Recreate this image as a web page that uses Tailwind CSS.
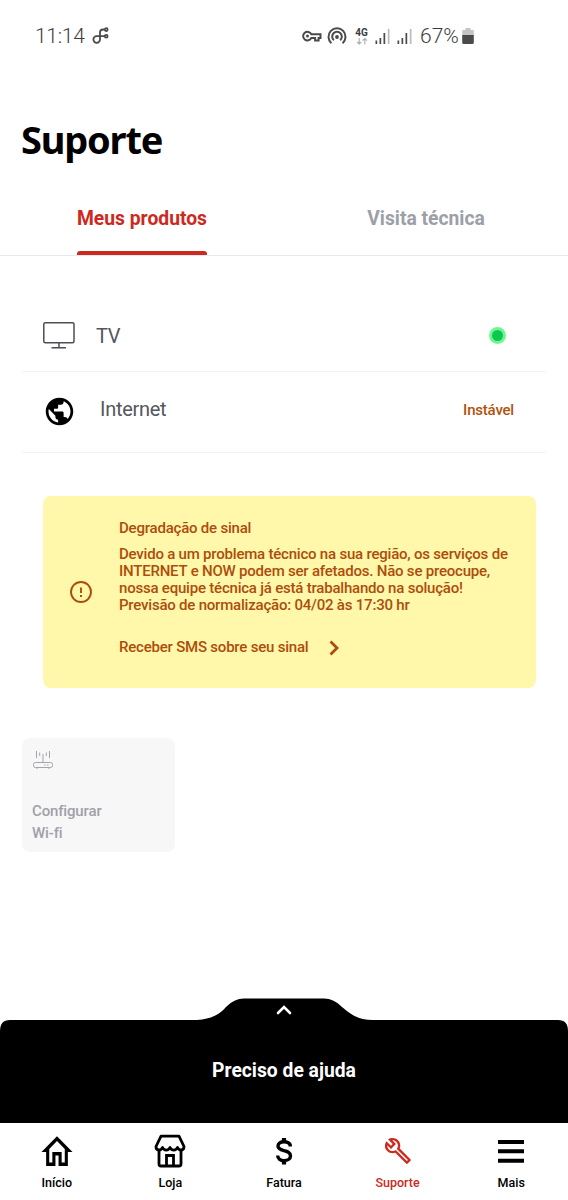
<!DOCTYPE html>
<html lang="pt-BR">
<head>
    <meta charset="UTF-8">
    <meta name="viewport" content="width=device-width, initial-scale=1.0">
    <script src="https://cdn.jsdelivr.net/npm/@tailwindcss/browser@4"></script>
    <title>Suporte</title>
</head>
<body class="bg-white">
    <div class="w-[568px] h-[1200px] flex flex-col overflow-hidden bg-white font-['Roboto',sans-serif]">

        <!-- Barra de status -->
        <div class="h-[72px] shrink-0 flex items-center pl-[35px] text-[#3c3c3c]">
            <span class="text-[21px] leading-6 font-light tracking-[-0.3px] w-[56px]">11:14</span>
            <svg class="w-[20px] h-[20px]" viewBox="0 0 20 20" fill="none" stroke="#4a4a4a" stroke-width="1.8">
                <path d="M13.500 3.500H12c-2 0-3 1-3 3v7a3.300 3.300 0 1 1-3.300-3.300H13.500"/>
                <circle cx="15.200" cy="3.600" r="1.400"/>
                <circle cx="15.200" cy="10.200" r="1.400"/>
            </svg>
            <div class="ml-[191px] flex items-center">
                <svg class="w-[20px] h-[14px]" viewBox="0 0 20 14" fill="none" stroke="#4a4a4a" stroke-width="2">
                    <path d="M9.300 5.200H18.500V9H16.600V11.600H13.100V9H9.300A4.300 4.300 0 1 1 9.300 5.200Z"/>
                    <circle cx="5.500" cy="7.100" r="1.500" fill="#4a4a4a" stroke="none"/>
                </svg>
                <svg class="ml-[5px] w-[20px] h-[18px]" viewBox="0 0 20 18" fill="none" stroke="#4a4a4a" stroke-width="2">
                    <path d="M4.400 16.200A8.500 8.500 0 1 1 15.600 16.200"/>
                    <path d="M6.800 13.200A4.800 4.800 0 1 1 13.200 13.200"/>
                    <circle cx="10" cy="10" r="1.900" fill="#4a4a4a" stroke="none"/>
                </svg>
                <div class="ml-[8px] w-[13px] flex flex-col items-center">
                    <span class="text-[10px] leading-[9px] font-bold">4G</span>
                    <svg class="w-[12px] h-[8px]" viewBox="0 0 12 8" fill="none" stroke="#aaa" stroke-width="1.100">
                        <path d="M3.200 1V7M1 4.800L3.200 7L5.400 4.800M8.800 7.500V1.500M6.600 3.700L8.800 1.500L11 3.700"/>
                    </svg>
                </div>
                <svg class="ml-[7px] w-[16px] h-[16px]" viewBox="0 0 16 16" fill="#4a4a4a">
                    <path d="M.5 12.500h1.700V16H.5zM4.500 10h1.700v6H4.500zM8.500 5h1.700v11H8.500z"/>
                    <path d="M12.800 1h1.700v15h-1.700z" fill="#bbb"/>
                </svg>
                <svg class="ml-[6px] w-[16px] h-[16px]" viewBox="0 0 16 16" fill="#4a4a4a">
                    <path d="M.5 12.500h1.700V16H.5zM4.500 10h1.700v6H4.500zM8.500 5h1.700v11H8.500z"/>
                    <path d="M12.800 1h1.700v15h-1.700z" fill="#bbb"/>
                </svg>
                <span class="ml-[7px] w-[42px] text-[21px] leading-6 font-light">67%</span>
                <svg class="w-[12px] h-[16px]" viewBox="0 0 12 16">
                    <path d="M3.500 0h5v2H11q.8 0 .8.800V8H.2V2.800Q.2 2 1 2h2.500z" fill="#c4c4c4"/>
                    <path d="M.2 7H11.800V14.500q0 1.500-1.500 1.500H1.700Q.2 16 .2 14.500z" fill="#4a4a4a"/>
                </svg>
            </div>
        </div>

        <h1 class="h-[111px] shrink-0 pl-[21px] pt-[41px] font-['Noto_Sans'] font-bold text-[38px] leading-[52px] tracking-[-1.200px] text-black">Suporte</h1>

        <!-- Abas -->
        <div class="h-[73px] shrink-0 flex border-b border-[#e9e9ec] text-[19.300px] leading-6 font-bold">
            <div class="flex-1 flex flex-col items-center">
                <div class="h-full flex flex-col justify-between pt-[24px] text-[#cc2a20]">
                    Meus produtos
                    <span class="h-1 rounded-t-[3px] bg-[#cc2a20]"></span>
                </div>
            </div>
            <div class="flex-1 pt-[24px] text-center text-[#9c9fa8]">Visita técnica</div>
        </div>

        <!-- Produtos -->
        <div class="mx-[22px] shrink-0 pt-[44px] text-[20px] tracking-[-0.300px] text-[#55565e]">
            <div class="h-[72px] flex items-center border-b border-[#f3f3f3]">
                <svg class="ml-[21px] w-[32px] h-[27px]" viewBox="0 0 32 27" fill="none" stroke="#4d4e54" stroke-width="1.500">
                    <rect x=".8" y=".8" width="30.200" height="20" rx="1.500"/>
                    <path d="M16 21v4.500M8.500 25.800h14.500"/>
                </svg>
                <span class="ml-[21px]">TV</span>
                <span class="ml-auto mr-[40px] w-[17px] h-[17px] rounded-full border-[3px] border-[#6ef78f] bg-[#0fc653]"></span>
            </div>
            <div class="h-[81px] flex items-center border-b border-[#f3f3f3] pb-[6px]">
                <svg class="ml-[21px] mt-[4px] w-[33px] h-[33px]" viewBox="0 0 24 24">
                    <path fill="#000" d="M12 2C6.480 2 2 6.480 2 12s4.480 10 10 10 10-4.480 10-10S17.520 2 12 2zm-1 17.930c-3.950-.49-7-3.850-7-7.930 0-.62.080-1.210.210-1.790L9 15v1c0 1.100.9 2 2 2v1.930zm6.900-2.540c-.26-.81-1-1.390-1.900-1.390h-1v-3c0-.55-.45-1-1-1H8v-2h2c.55 0 1-.45 1-1V7h2c1.100 0 2-.9 2-2v-.41c2.930 1.190 5 4.060 5 7.410 0 2.080-.8 3.970-2.100 5.390z"/>
                </svg>
                <span class="ml-[24px]">Internet</span>
                <span class="ml-auto mr-[32px] mt-[3px] text-[15px] tracking-[-0.200px] font-medium text-[#b0530c]">Instável</span>
            </div>
        </div>

        <!-- Aviso -->
        <div class="mt-[43px] ml-[43px] w-[493px] h-[192px] shrink-0 flex rounded-lg bg-[#fff8ab] text-[#ad4d0b]">
            <svg class="ml-[26px] mt-[84px] w-[24px] h-[24px]" viewBox="0 0 24 24" fill="none" stroke="currentColor" stroke-width="1.900">
                <circle cx="12" cy="12" r="10"/>
                <path d="M12 7.500v5.500M12 15v2"/>
            </svg>
            <div class="ml-[26px] pt-[24px] text-[15px] leading-[17px] tracking-[-0.210px] font-medium whitespace-nowrap">
                <p>Degradação de sinal</p>
                <p class="mt-[9px]">Devido a um problema técnico na sua região, os serviços de<br>INTERNET e NOW podem ser afetados. Não se preocupe,<br>nossa equipe técnica já está trabalhando na solução!<br>Previsão de normalização: 04/02 às 17:30 hr</p>
                <div class="mt-[25px] flex items-center">
                    <span>Receber SMS sobre seu sinal</span>
                    <svg class="ml-[20px] w-[12px] h-[16px]" viewBox="0 0 12 16" fill="none" stroke="currentColor" stroke-width="2.800">
                        <path d="M2.500 1.500L9 8L2.500 14.500"/>
                    </svg>
                </div>
            </div>
        </div>

        <div class="mt-[50px] ml-[22px] w-[153px] h-[114px] shrink-0 rounded-lg bg-[#f7f7f7] pl-[10px] pt-[12px]">
            <svg class="w-[22px] h-[20px]" viewBox="0 0 22 20" fill="none" stroke="#a3a4ab" stroke-width="1">
                <rect x="1.500" y="12.500" width="19" height="5" rx="2"/>
                <path d="M11 4v8.500M4.500 1v7M7.700 2.500v3.500M14.300 2.500v3.500M17.500 1v7M5 17.500v1.500M17 17.500v1.500M12 15h1.500M15 15h1.500"/>
            </svg>
            <p class="mt-[30px] text-[15px] leading-[22px] tracking-[-0.150px] font-medium text-[#a0a1a9]">Configurar<br>Wi-fi</p>
        </div>

        <!-- Painel de ajuda -->
        <div class="mt-auto h-[125px] shrink-0 flex flex-col text-white">
            <svg class="w-[568px] h-[40px] shrink-0" viewBox="0 0 568 40">
                <path fill="#000" d="M0 40V33Q0 22 10 22H197C212 21 220 16 226 9Q234 .5 244 .5H324Q334 .5 342 9C350 16 358 22 373 22H558Q568 22 568 33V40z"/>
                <path d="M278 15L284 9L290 15" fill="none" stroke="#fff" stroke-width="2.600" stroke-linecap="round"/>
            </svg>
            <div class="flex-1 bg-black pt-[21px] text-center text-[19.300px] leading-6 font-bold">Preciso de ajuda</div>
        </div>

        <!-- Navegação -->
        <nav class="h-[77px] shrink-0 grid grid-cols-5 pt-[10px] text-[12.500px] leading-4 font-medium text-black">
            <a href="#" class="flex flex-col items-center gap-[6px]">
                <svg class="w-[36px] h-[36px]" viewBox="0.4 1.1 23.2 20.6" preserveAspectRatio="none">
                    <path d="M12 5.690l5 4.500V18h-2v-6H9v6H7v-7.810l5-4.500M12 3L2 12h3v8h6v-6h2v6h6v-8h3L12 3z"/>
                </svg>
                Início
            </a>
            <a href="#" class="flex flex-col items-center gap-[6px]">
                <svg class="w-[36px] h-[36px]" viewBox="0 0 36 36" fill="none" stroke="#000" stroke-width="2.800">
                    <path d="M9 3.200H27L32 13.500C32 18 27 18 25.500 14.500C24 18 19.500 18 18 14.500C16.500 18 12 18 10.500 14.500C9 18 4 18 4 13.500Z" stroke-linejoin="round"/>
                    <path d="M7 16.500V31Q7 33 9 33H27Q29 33 29 31V16.500M14.500 33V22.500H21.500V33"/>
                </svg>
                Loja
            </a>
            <a href="#" class="flex flex-col items-center gap-[6px]">
                <svg class="w-[36px] h-[36px]" viewBox="0 0 36 36" fill="none" stroke="#000" stroke-width="3.400">
                    <path d="M24.300 13.500C24.300 10 21.500 8.700 18 8.700S12 10.200 12 13C12 19.500 24.500 15.500 24.500 23C24.500 26 21.500 27.600 18 27.600S11.700 26 11.700 22.500"/>
                    <path d="M18 5V9M18 27V31.500" stroke-width="4.200"/>
                </svg>
                Fatura
            </a>
            <a href="#" class="flex flex-col items-center gap-[6px] text-[#cc2a20]">
                <svg class="w-[36px] h-[36px]" viewBox="-3.2 -3.2 30.5 30.5" fill="currentColor">
                    <path d="M22.610 19l-9.080-9.080c.93-2.340.45-5.100-1.440-7C9.790.61 6.210.4 3.660 2.260L7.500 6.110 6.080 7.520 2.250 3.690C.39 6.230.6 9.820 2.900 12.110c1.860 1.860 4.570 2.350 6.890 1.480l9.110 9.110c.39.39 1.020.39 1.410 0l2.300-2.300c.4-.38.4-1.010 0-1.400zm-3 1.590l-9.460-9.460c-.61.45-1.290.72-2 .82-1.360.2-2.790-.21-3.830-1.250C3.370 9.760 2.930 8.500 3 7.260l3.090 3.090 4.240-4.240-3.090-3.090c1.240-.07 2.490.37 3.440 1.310 1.080 1.080 1.490 2.570 1.240 3.960-.12.71-.42 1.370-.88 1.960l9.450 9.450-.88.89z"/>
                </svg>
                Suporte
            </a>
            <a href="#" class="flex flex-col items-center gap-[6px]">
                <svg class="w-[36px] h-[36px]" viewBox="0 0 36 36">
                    <path d="M5 7h26v4H5zM5 16.300h26v4H5zM5 25.700h26v4H5z"/>
                </svg>
                Mais
            </a>
        </nav>
    </div>
</body>
</html>
